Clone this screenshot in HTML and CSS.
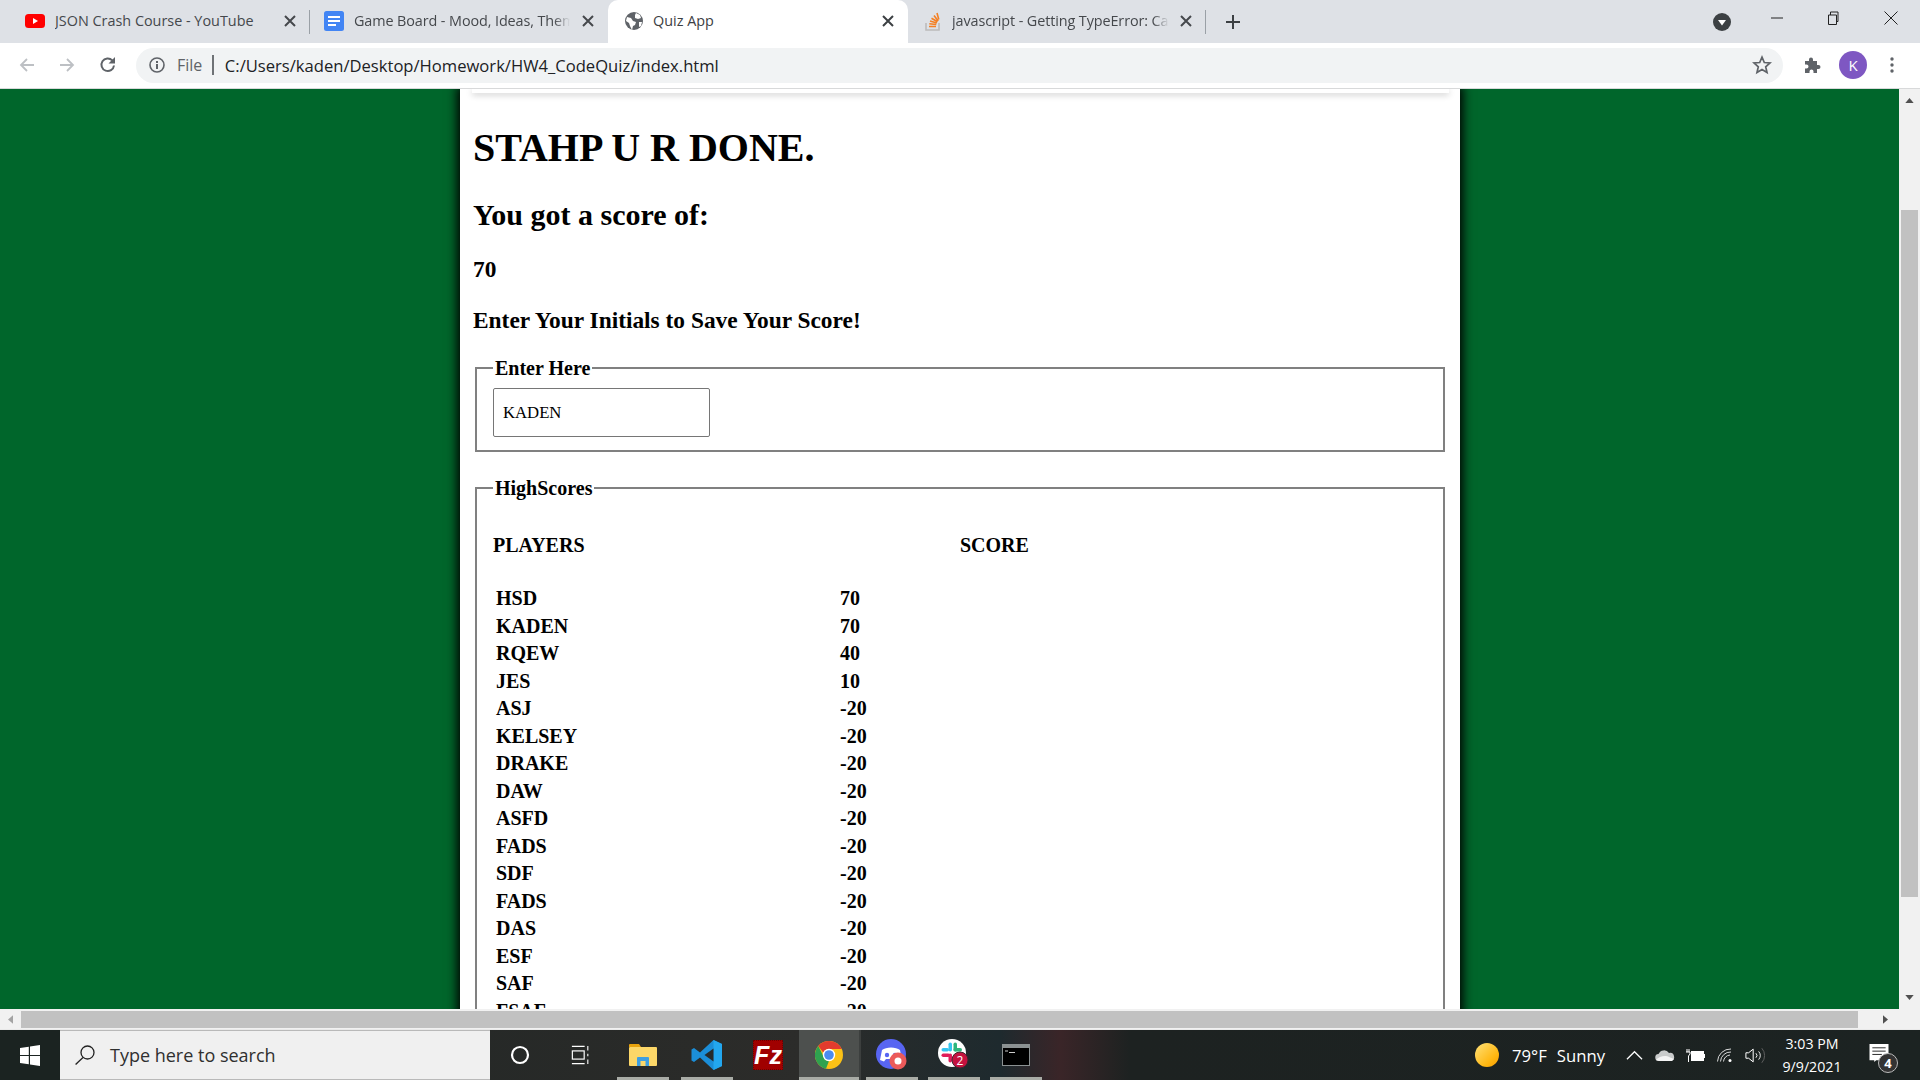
FILE: index.html
```html
<!DOCTYPE html>
<html lang="en">
<head>
<meta charset="utf-8">
<title>Quiz App</title>
<link rel="stylesheet" href="styles.css">
</head>
<body>
<div class="tabstrip">
  <div class="tab tab-a">
    <svg class="fav" viewBox="0 0 20 20"><rect x="0" y="3" width="20" height="14" rx="3.5" fill="#f00"/><path d="M8 7l5 3-5 3z" fill="#fff"/></svg>
    <span class="tab-title">JSON Crash Course - YouTube</span>
    <svg class="tab-x" viewBox="0 0 12 12"><path d="M1 1l10 10M11 1L1 11" stroke="#45484c" stroke-width="2"/></svg>
  </div>
  <div class="tab tab-b">
    <svg class="fav" viewBox="0 0 20 20"><rect x="0" y="0" width="20" height="20" rx="2.5" fill="#4285f4"/><path d="M4 5h12v2H4zM4 9h12v2H4zM4 13h8v2H4z" fill="#fff"/></svg>
    <span class="tab-title fade">Game Board - Mood, Ideas, Them</span>
    <svg class="tab-x" viewBox="0 0 12 12"><path d="M1 1l10 10M11 1L1 11" stroke="#45484c" stroke-width="2"/></svg>
  </div>
  <div class="tab tab-active">
    <svg class="fav" viewBox="0 0 20 20"><circle cx="10" cy="10" r="9" fill="#5f6368"/><path d="M3 6l4 1 2 3 3 1-1 3-2 1-1 4-2-4-1-3-3-2zM12 2l4 2 1 3-3 1-3-1 0-3zM15 11l3 0-1 4-2 1z" fill="#fff"/></svg>
    <span class="tab-title">Quiz App</span>
    <svg class="tab-x" viewBox="0 0 12 12"><path d="M1 1l10 10M11 1L1 11" stroke="#3c4043" stroke-width="2"/></svg>
  </div>
  <div class="tab tab-d">
    <svg class="fav" viewBox="0 0 20 20"><path d="M3 12v7h13v-7" fill="none" stroke="#bcbbbb" stroke-width="1.6"/><path d="M6 15.5h7M6.3 12.8l7 .7M7 10l6.8 1.9M8.5 7.2l6 3.6M11 4.5l4.2 5.6M14 2l1.800 6.500" stroke="#f48024" stroke-width="1.600"/></svg>
    <span class="tab-title fade">javascript - Getting TypeError: Ca</span>
    <svg class="tab-x" viewBox="0 0 12 12"><path d="M1 1l10 10M11 1L1 11" stroke="#45484c" stroke-width="2"/></svg>
  </div>
  <button class="newtab" type="button"><svg viewBox="0 0 16 16"><path d="M8 1v14M1 8h14" stroke="#3c4043" stroke-width="2"/></svg></button>
  <div class="strip-space"></div>
  <svg class="tabsearch" viewBox="0 0 18 18"><circle cx="9" cy="9" r="9" fill="#3c4043"/><path d="M5 7h8l-4 5.500z" fill="#fff"/></svg>
  <div class="winctl">
    <svg viewBox="0 0 14 14"><path d="M1 7h12" stroke="#222" stroke-width="1"/></svg>
    <svg viewBox="0 0 14 14"><path d="M2.500 4h8v9.500h-8zM4.500 4V1h7.500v9.500h-1.500" fill="none" stroke="#222" stroke-width="1"/></svg>
    <svg viewBox="0 0 14 14"><path d="M.5.5l13 13M13.500.5l-13 13" stroke="#222" stroke-width="1"/></svg>
  </div>
</div>

<div class="toolbar">
  <svg class="nav-ico ico-back" viewBox="0 0 16 16"><path d="M15 8H2M8 2L2 8l6 6" fill="none" stroke="#bdc0c4" stroke-width="1.800"/></svg>
  <svg class="nav-ico ico-fwd" viewBox="0 0 16 16"><path d="M1 8h13M8 2l6 6-6 6" fill="none" stroke="#bdc0c4" stroke-width="1.800"/></svg>
  <svg class="nav-ico ico-reload" viewBox="0 0 18 18"><path d="M15 9.500A6.300 6.300 0 1 1 13.300 4.400" fill="none" stroke="#5f6368" stroke-width="2"/><path d="M16 1v6.500H9.500z" fill="#5f6368"/></svg>
  <div class="omnibox">
    <svg class="info" viewBox="0 0 16 16"><circle cx="8" cy="8" r="7" fill="none" stroke="#5f6368" stroke-width="1.600"/><path d="M7 7h2v5H7zM7 4h2v2H7z" fill="#5f6368"/></svg>
    <span class="scheme">File</span>
    <span class="divider"></span>
    <span class="url">C:/Users/kaden/Desktop/Homework/HW4_CodeQuiz/index.html</span>
    <svg class="star" viewBox="0 0 20 20"><path d="M10 2.200l2.300 5.300 5.700.5-4.300 3.800 1.300 5.600-5-3-5 3 1.300-5.600L2 8l5.700-.5z" fill="none" stroke="#5f6368" stroke-width="1.700"/></svg>
  </div>
  <svg class="puzzle" viewBox="0 0 18 18"><path d="M1 5h4V3.500a2 2 0 0 1 4 0V5h4v4h1.500a2 2 0 0 1 0 4H13v4H9.500v-1.500a2 2 0 0 0-4 0V17H1v-4.500h1.500a2 2 0 0 0 0-4H1z" fill="#5f6368"/></svg>
  <div class="avatar">K</div>
  <svg class="menu" viewBox="0 0 4 16"><circle cx="2" cy="2" r="1.700" fill="#5f6368"/><circle cx="2" cy="8" r="1.700" fill="#5f6368"/><circle cx="2" cy="14" r="1.700" fill="#5f6368"/></svg>
</div>

<div class="content-row">
  <div class="viewport">
    <main class="panel">
      <div class="card-edge"></div>
      <h1>STAHP U R DONE.</h1>
      <h2>You got a score of:</h2>
      <h3 class="score">70</h3>
      <h3 class="prompt">Enter Your Initials to Save Your Score!</h3>
      <fieldset class="box box-enter">
        <legend>Enter Here</legend>
        <input class="initials" type="text" value="KADEN">
      </fieldset>
      <fieldset class="box box-scores">
        <legend>HighScores</legend>
        <div class="score-head"><span>PLAYERS</span><span>SCORE</span></div>
        <div class="score-list">
          <div class="row"><span>HSD</span><span>70</span></div>
          <div class="row"><span>KADEN</span><span>70</span></div>
          <div class="row"><span>RQEW</span><span>40</span></div>
          <div class="row"><span>JES</span><span>10</span></div>
          <div class="row"><span>ASJ</span><span>-20</span></div>
          <div class="row"><span>KELSEY</span><span>-20</span></div>
          <div class="row"><span>DRAKE</span><span>-20</span></div>
          <div class="row"><span>DAW</span><span>-20</span></div>
          <div class="row"><span>ASFD</span><span>-20</span></div>
          <div class="row"><span>FADS</span><span>-20</span></div>
          <div class="row"><span>SDF</span><span>-20</span></div>
          <div class="row"><span>FADS</span><span>-20</span></div>
          <div class="row"><span>DAS</span><span>-20</span></div>
          <div class="row"><span>ESF</span><span>-20</span></div>
          <div class="row"><span>SAF</span><span>-20</span></div>
          <div class="row"><span>FSAF</span><span>-20</span></div>
        </div>
      </fieldset>
    </main>
  </div>
  <div class="vscroll">
    <svg class="arrow-up" viewBox="0 0 10 6"><path d="M5 0l5 6H0z" fill="#505050"/></svg>
    <div class="vthumb"></div>
    <svg class="arrow-down" viewBox="0 0 10 6"><path d="M5 6L0 0h10z" fill="#505050"/></svg>
  </div>
</div>

<div class="hscroll">
  <svg class="harrow" viewBox="0 0 6 10"><path d="M0 5l6-5v10z" fill="#a3a3a3"/></svg>
  <div class="hthumb"></div>
  <svg class="harrow" viewBox="0 0 6 10"><path d="M6 5L0 0v10z" fill="#505050"/></svg>
</div>

<footer class="taskbar">
  <div class="tb-start">
    <svg viewBox="0 0 20 21"><path d="M0 3l8.800-1.300v8.300H0zM10 1.500L20 0v10H10zM0 11h8.800v8.300L0 18zM10 11h10v10l-10-1.500z" fill="#fff"/></svg>
  </div>
  <div class="tb-search">
    <svg viewBox="0 0 20 20"><circle cx="12.500" cy="7.500" r="6.500" fill="none" stroke="#222" stroke-width="1.300"/><path d="M8 12.500L.6 19.500" stroke="#222" stroke-width="1.300"/></svg>
    <span>Type here to search</span>
  </div>
  <div class="tb-apps">
    <div class="tb-app tb-cortana"><svg viewBox="0 0 20 20"><circle cx="10" cy="10" r="8" fill="none" stroke="#fff" stroke-width="2.200"/></svg></div>
    <div class="tb-app tb-taskview"><svg viewBox="0 0 22 22"><path d="M1 1.500h14M1 20.500h14M18.500 1v5M18.500 9.500v3M18.500 16v5" fill="none" stroke="#fff" stroke-width="1.200"/><rect x="1.500" y="6.500" width="13" height="9" fill="none" stroke="#fff" stroke-width="1.300"/></svg></div>
    <div class="tb-app tb-open tb-split"><svg viewBox="0 0 28 24"><path d="M0 2a1 1 0 0 1 1-1h9l2 3h-12z" fill="#e8a30d"/><rect x="0" y="4" width="28" height="19" rx="1" fill="#fcd768"/><path d="M8 23v-8a1 1 0 0 1 1-1h10a1 1 0 0 1 1 1v8h-3.500v-5h-5v5z" fill="#3e9fe0"/></svg></div>
    <div class="tb-app tb-open"><svg viewBox="0 0 32 32"><path d="M22.500 1L31 5v22l-8.500 4L9 18.500 3 23l-2.500-1.500v-11L3 9l6 4.500z" fill="#1b8ed8"/><path d="M22.500 1L31 5v22l-8.500 4z" fill="#23a7ef"/><path d="M22.500 9.500v13L13.500 16z" fill="#262a2a"/></svg></div>
    <div class="tb-app"><div class="fz"><span>Fz</span></div></div>
    <div class="tb-app tb-open tb-active"><svg viewBox="0 0 28 28"><circle cx="14" cy="14" r="14" fill="#fbc116"/><path d="M14 0a14 14 0 0 1 12.600 8H14a6 6 0 0 0-5.600 3.800L3.300 5A14 14 0 0 1 14 0z" fill="#e33b2e"/><path d="M3.300 5l5.500 11a6 6 0 0 0 5.200 4l-3 7.800A14 14 0 0 1 3.300 5z" fill="#2fa24f"/><circle cx="14" cy="14" r="6.200" fill="#fff"/><circle cx="14" cy="14" r="4.800" fill="#4a8bf0"/></svg></div>
    <div class="tb-app tb-open"><svg viewBox="0 0 32 32"><circle cx="15" cy="15" r="15" fill="#5865f2"/><path d="M6 11c4-3.500 14-3.500 18 0l2 10-4 1.500-2-2.500H10l-2 2.500L4 21z" fill="#fff"/><circle cx="11" cy="16" r="2.200" fill="#5865f2"/><circle cx="19" cy="16" r="2.200" fill="#5865f2"/><circle cx="22" cy="22" r="8.500" fill="#ec5a5a"/><circle cx="22" cy="22" r="3.500" fill="#fff"/></svg></div>
    <div class="tb-app tb-open"><svg viewBox="0 0 32 32"><circle cx="14" cy="14" r="14" fill="#fff"/><rect x="10.500" y="3.500" width="3.500" height="9" rx="1.750" fill="#36c5f0"/><rect x="3.500" y="9" width="7.500" height="3.500" rx="1.750" fill="#36c5f0"/><rect x="15.500" y="3.500" width="3.500" height="9" rx="1.750" fill="#2eb67d"/><rect x="15.500" y="9" width="8.500" height="3.500" rx="1.750" fill="#2eb67d"/><rect x="3.500" y="14.500" width="8.500" height="3.500" rx="1.750" fill="#e01e5a"/><rect x="10.500" y="14.500" width="3.500" height="9" rx="1.750" fill="#e01e5a"/><circle cx="22" cy="21" r="8" fill="#c5123f" stroke="#3c2730" stroke-width="1"/><text class="badge-num" x="22" y="25.500" text-anchor="middle">2</text></svg></div>
    <div class="tb-app tb-open"><svg viewBox="0 0 28 22"><rect x=".5" y=".5" width="27" height="21" fill="#000" stroke="#8b9192"/><rect x="1" y="1" width="26" height="3" fill="#8b9192"/><path d="M3 7h3M7 8.500h6" stroke="#ccc" stroke-width="1"/></svg></div>
  </div>
  <div class="tb-spacer"></div>
  <div class="tb-weather">
    <span class="sun"></span>
    <span class="temp">79°F</span>
    <span class="cond">Sunny</span>
  </div>
  <div class="tb-tray">
    <svg class="t-caret" viewBox="0 0 18 10"><path d="M1 9.500l8-8 8 8" fill="none" stroke="#fff" stroke-width="1.300"/></svg>
    <svg class="t-cloud" viewBox="0 0 20 13"><path d="M4 12a3.500 3.500 0 0 1-.5-7A6 6 0 0 1 14 4a4 4 0 0 1 2 8z" fill="#c9cbcb"/><path d="M1 11c3-4 10-5 13-3l5 2-2 2H4z" fill="#f4f4f4"/></svg>
    <svg class="t-batt" viewBox="0 0 20 13"><path d="M2 0v3M4 0v3M1 3h4v2L3.500 7v6" fill="none" stroke="#fff" stroke-width="1"/><rect x="6.500" y="2.500" width="12" height="9" fill="#fff" stroke="#fff"/><path d="M19.500 5v4" stroke="#fff" stroke-width="1"/></svg>
    <svg class="t-wifi" viewBox="0 0 16 14"><path d="M.5 13.500A13 13 0 0 1 14 1M3.500 13.500A10 10 0 0 1 14 4M6.500 13.500A7 7 0 0 1 13 7" fill="none" stroke="#d9dada" stroke-width="1"/><circle cx="13" cy="12.500" r="1.500" fill="#fff"/></svg>
    <svg class="t-vol" viewBox="0 0 22 18"><path d="M1 6h3l5-4v14l-5-4H1z" fill="none" stroke="#fff" stroke-width="1.100"/><path d="M12 6.500a3.500 3.500 0 0 1 0 5M15 4.500a6.500 6.500 0 0 1 0 9" fill="none" stroke="#fff" stroke-width="1"/><path d="M18.500 1a12 12 0 0 1 0 16" fill="none" stroke="#666" stroke-width="1"/></svg>
  </div>
  <div class="tb-clock"><span>3:03 PM</span><span>9/9/2021</span></div>
  <div class="tb-notify">
    <svg viewBox="0 0 20 20"><path d="M0 0h20v17H7l-2 2v-2H0z" fill="#fff"/><path d="M3 4h14M3 7.500h14M3 11h10" stroke="#222" stroke-width="1"/></svg>
    <span class="notify-badge">4</span>
  </div>
</footer>
</body>
</html>
```

FILE: styles.css
```css
* { box-sizing: border-box; }
html, body { margin: 0; height: 100%; }
body {
  display: flex;
  flex-direction: column;
  height: 1080px;
  overflow: hidden;
  font-family: "Open Sans", "Noto Sans", sans-serif;
  background: #fff;
}
svg { display: block; flex: none; }

/* browser tab strip */
.tabstrip {
  display: flex;
  align-items: center;
  height: 43px;
  flex: none;
  padding-left: 12px;
  background: #dee1e6;
}
.tab {
  position: relative;
  display: flex;
  align-items: center;
  gap: 9px;
  width: 298px;
  height: 43px;
  padding: 0 14px 2px 13px;
  color: #45484c;
  font-size: 14.400px;
  white-space: nowrap;
}
.tab-a { gap: 10px; }
.tab-b { padding-left: 14px; gap: 10px; }
.tab-d { padding-left: 15px; }
.tab-a::after, .tab-d::after {
  content: "";
  position: absolute;
  right: 0;
  top: 10px;
  width: 1px;
  height: 24px;
  background: #9aa0a6;
}
.tab-active {
  width: 300px;
  padding-left: 16px;
  padding-right: 14px;
  background: #fff;
  border-radius: 10px 10px 0 0;
  color: #3c4043;
}
.fav { width: 20px; height: 20px; }
.tab-title { flex: 1; overflow: hidden; }
.fade {
  -webkit-mask-image: linear-gradient(to right, #000 calc(100% - 16px), transparent);
  mask-image: linear-gradient(to right, #000 calc(100% - 16px), transparent);
  letter-spacing: -.1px;
}
.tab-x { width: 12px; height: 12px; margin-left: 2px; }
.newtab {
  width: 16px;
  height: 16px;
  margin-left: 19px;
  padding: 0;
  border: 0;
  background: none;
}
.newtab svg { width: 16px; height: 16px; }
.strip-space { flex: 1; }
.tabsearch { width: 18px; height: 18px; margin-right: 39px; margin-top: 1px; }
.winctl { display: flex; gap: 42px; margin-right: 22px; margin-bottom: 7px; }
.winctl svg { width: 14px; height: 14px; }
.winctl svg:last-child { margin-left: 2px; }

/* address bar */
.toolbar {
  display: flex;
  align-items: center;
  height: 46px;
  flex: none;
  padding: 2px 0 3px 19px;
  background: #fff;
  border-bottom: 1px solid #d8d9da;
}
.nav-ico { width: 16px; height: 16px; }
.ico-fwd { margin-left: 24px; }
.ico-reload { width: 18px; height: 18px; margin-left: 24px; }
.omnibox {
  display: flex;
  align-items: center;
  width: 1647px;
  height: 35px;
  margin-left: 19px;
  padding: 0 11px 0 13px;
  border-radius: 18px;
  background: #f1f3f4;
}
.info { width: 16px; height: 16px; }
.scheme { margin-left: 12px; color: #5f6368; font-size: 16px; }
.divider { width: 1.500px; height: 20px; margin: 0 11px 0 10px; background: #6f7276; }
.url { flex: 1; color: #202124; font-size: 16.600px; white-space: nowrap; }
.star { width: 20px; height: 20px; }
.puzzle { width: 18px; height: 18px; margin-left: 21px; }
.avatar {
  display: flex;
  align-items: center;
  justify-content: center;
  width: 28px;
  height: 28px;
  margin-left: 17px;
  border-radius: 50%;
  background: #7e57c2;
  color: #fff;
  font-size: 15px;
}
.menu { width: 4px; height: 16px; margin-left: 23px; }

/* page area */
.content-row { display: flex; flex: 1; min-height: 0; }
.viewport {
  flex: 1;
  min-width: 0;
  overflow: hidden;
  background: #00662b;
}
.panel {
  position: relative;
  width: 1000px;
  min-height: 1200px;
  margin-left: 460px;
  padding: 0 12px 0 13px;
  background: #fff;
  box-shadow: 0 0 10px 3px #000;
  color: #000;
  font-family: "Liberation Serif", "Times New Roman", serif;
}
.card-edge {
  width: 977px;
  margin-left: -1px;
  height: 4px;
  background: #fff;
  box-shadow: 0 2px 6px rgba(0, 0, 0, .22);
}
.panel h1 {
  margin: 32px 0 0;
  font-size: 40px;
  line-height: 46px;
}
.panel h2 {
  margin: 26px 0 0;
  font-size: 30px;
  line-height: 35px;
}
.panel h3 {
  margin: 0;
  font-size: 23.400px;
  line-height: 27px;
}
.score { margin-top: 24px !important; }
.prompt { margin-top: 24px !important; }
.box {
  width: 970px;
  margin: 0 0 0 2px;
  padding: 0 15px 0 16px;
  border: 2.500px solid #808080;
  border-top-width: 2px;
}
.box legend {
  padding: 2px 2px 0;
  margin-left: 0;
  font-size: 20px;
  font-weight: 700;
  line-height: 23px;
}
.box-enter {
  height: 97px;
  margin-top: 21px;
}
.initials {
  display: block;
  width: 217px;
  height: 49px;
  margin-top: 8px;
  padding: 0 9px;
  border: 1.300px solid #767676;
  border-radius: 2px;
  font-family: "Liberation Serif", "Times New Roman", serif;
  font-size: 16.700px;
  color: #000;
}
.box-scores {
  margin-top: 23px;
  height: 900px;
}
.score-head {
  display: grid;
  grid-template-columns: 467px 1fr;
  margin-top: 34px;
  font-size: 20px;
  font-weight: 700;
  line-height: 23px;
}
.score-list {
  margin-top: 30px;
  padding-left: 3px;
  font-size: 20px;
  font-weight: 700;
}
.row {
  display: grid;
  grid-template-columns: 344px 1fr;
  height: 27.500px;
  line-height: 23px;
}

/* scrollbars */
.vscroll {
  position: relative;
  width: 21px;
  flex: none;
  display: flex;
  flex-direction: column;
  align-items: center;
  background: #f1f1f1;
}
.arrow-up { width: 9px; height: 5px; margin-top: 9px; }
.vthumb { width: 17px; height: 687px; margin-top: 107px; background: #c1c1c1; }
.arrow-down { width: 9px; height: 5px; margin-top: auto; margin-bottom: 9px; }
.hscroll {
  display: flex;
  align-items: center;
  height: 20px;
  flex: none;
  padding: 2px 0 1px;
  background: #f1f1f1;
}
.harrow { width: 5px; height: 9px; margin: 0 8px; }
.hthumb { width: 1837px; height: 17px; background: #c1c1c1; }
.hscroll .harrow:first-child { margin-right: 8px; }
.hscroll .harrow:last-child { margin-left: 25px; }

/* windows taskbar */
.taskbar {
  display: flex;
  align-items: stretch;
  height: 51px;
  flex: none;
  color: #fff;
  background: linear-gradient(to right, #1d2423 0, #2c2c2a 800px, #1e2a2e 1000px, #3a2528 1060px, #1d2221 1130px, #1c2322 100%);
  border-top: 1px solid #e9e9e9;
}
.tb-start {
  display: flex;
  align-items: center;
  width: 60px;
  padding-left: 20px;
  background: #1b2321;
}
.tb-start svg { width: 20px; height: 21px; }
.tb-search {
  display: flex;
  align-items: center;
  gap: 15px;
  width: 430px;
  padding-left: 15px;
  background: #f0f0f0;
  border-top: 1px solid #b9b9b9;
  border-bottom: 1px solid #b9b9b9;
  color: #2f2f2f;
  font-size: 18px;
}
.tb-search svg { width: 20px; height: 20px; }
.tb-apps { display: flex; padding-left: 0; }
.tb-app {
  position: relative;
  display: flex;
  align-items: center;
  justify-content: center;
  width: 62px;
}
.tb-open::after {
  content: "";
  position: absolute;
  left: 5px;
  right: 5px;
  bottom: 0;
  height: 3px;
  background: #a9aca6;
}
.tb-cortana { width: 60px; }
.tb-cortana svg { width: 20px; height: 20px; }
.tb-taskview svg { width: 20px; height: 22px; }
.tb-split svg { width: 28px; height: 24px; }
.tb-app:nth-child(4) { margin-left: 2px; }
.tb-app:nth-child(5) { margin-left: -1px; }
.tb-app:nth-child(4) svg { width: 32px; height: 32px; }
.tb-app:nth-child(6) svg { width: 28px; height: 28px; }
.tb-app:nth-child(7) svg { width: 32px; height: 32px; }
.tb-app:nth-child(8) svg { width: 32px; height: 32px; }
.tb-app:nth-child(9) svg { width: 28px; height: 22px; }
.tb-active {
  background: #4d504e;
  border-right: 2px solid #3c3f3e;
}
.tb-active::after { left: 0; right: 0; }
.fz {
  display: flex;
  align-items: center;
  justify-content: center;
  width: 30px;
  height: 30px;
  background: #a00000;
  border: 1px dotted #6d0000;
  color: #fff;
  font-family: "Liberation Sans", sans-serif;
  font-size: 25px;
  font-style: italic;
  font-weight: 700;
}
.badge-num {
  fill: #fff;
  font-family: "Open Sans", sans-serif;
  font-size: 12px;
}
.tb-spacer { flex: 1; }
.tb-weather {
  display: flex;
  align-items: center;
  margin-right: 21px;
  font-size: 16.700px;
}
.sun {
  width: 24px;
  height: 24px;
  border-radius: 50%;
  background: linear-gradient(135deg, #ffe27a, #ffb60f 70%, #f69a05);
}
.temp { margin-left: 13px; }
.cond { margin-left: 10px; }
.tb-tray { display: flex; align-items: center; gap: 12px; }
.t-caret { width: 17px; height: 10px; }
.t-cloud { width: 20px; height: 13px; }
.t-batt { width: 20px; height: 13px; margin-left: -2px; }
.t-wifi { width: 16px; height: 14px; }
.t-vol { width: 20px; height: 17px; }
.tb-clock {
  display: flex;
  flex-direction: column;
  align-items: center;
  justify-content: center;
  gap: 3px;
  width: 90px;
  margin-left: 2px;
  font-size: 14.200px;
  line-height: 20px;
}
.tb-notify {
  position: relative;
  display: flex;
  align-items: center;
  width: 63px;
  padding-left: 12px;
  padding-bottom: 3px;
}
.tb-notify svg { width: 20px; height: 19px; }
.notify-badge {
  position: absolute;
  left: 21px;
  top: 23px;
  width: 20px;
  height: 20px;
  border: 1px solid #bbb;
  border-radius: 50%;
  background: #333;
  font-size: 13px;
  font-weight: 700;
  line-height: 18px;
  text-align: center;
}
```
